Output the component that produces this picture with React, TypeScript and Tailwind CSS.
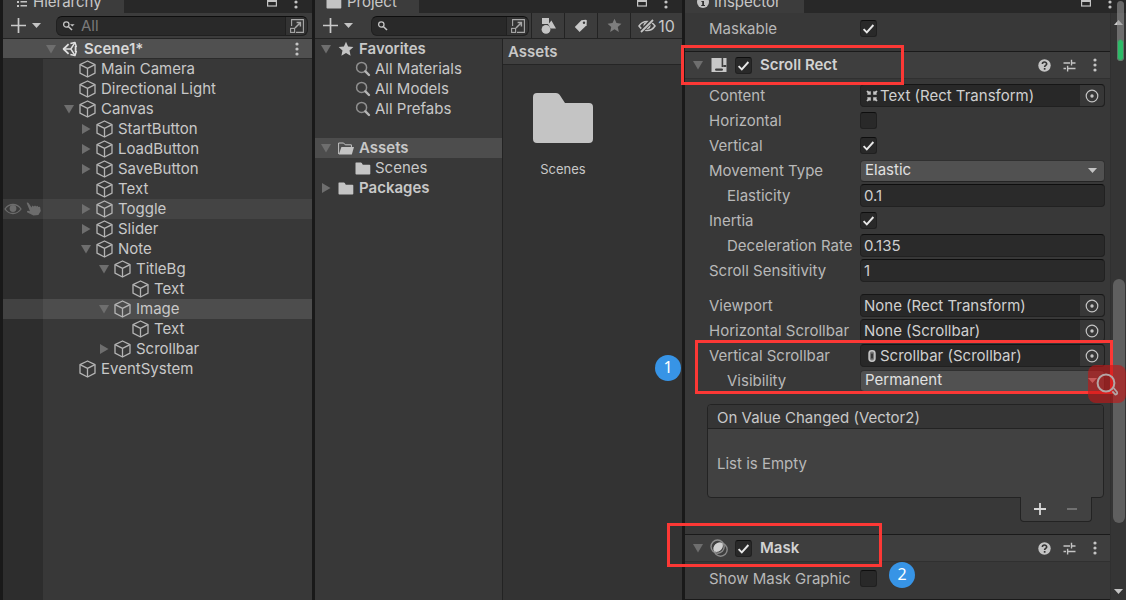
import React, { useId } from "react";
import type { ReactNode } from "react";

/* ---------- icons ---------- */

function Cube() {
  return (
    <svg className="h-[18px] w-[17px] shrink-0" viewBox="0 0 17 18" fill="none" stroke="#b4b4b4" strokeWidth="1.3" strokeLinejoin="round" aria-hidden="true">
      <path d="M8.5 1 L16 4.6 V13.2 L8.5 17 L1 13.2 V4.6 Z" />
      <path d="M1 4.6 L8.5 8.4 L16 4.6 M8.5 8.4 V17" />
    </svg>
  );
}

function UnityLogo() {
  return (
    <svg className="h-4 w-4 shrink-0" viewBox="0 0 16 16" fill="none" stroke="#e0e0e0" strokeWidth="1.5" strokeLinejoin="round" aria-hidden="true">
      <path d="M8.4 2.6 L13 1.4 L14.4 6 M14.4 10 L13 14.6 L8.4 13.4" />
      <path d="M6.6 3.2 L1.6 8 L6.6 12.8" strokeWidth="1.8" />
      <path d="M1.6 8 H8.8 M8.8 8 L12.8 1.8 M8.8 8 L12.8 14.2" />
      <path d="M13.6 5 V11" strokeWidth="1.8" />
    </svg>
  );
}

function Triangle({ open }: { open: boolean }) {
  return (
    <svg className="h-[10px] w-[10px]" viewBox="0 0 10 10" fill="#6e6e6e" aria-hidden="true">
      {open ? <path d="M0 1 H10 L5 9.5 Z" /> : <path d="M1 0 L9.5 5 L1 10 Z" />}
    </svg>
  );
}

function Caret() {
  return (
    <svg className="h-[5px] w-[9px]" viewBox="0 0 9 5" fill="#c4c4c4" aria-hidden="true">
      <path d="M0 0 H9 L4.5 5 Z" />
    </svg>
  );
}

function PlusIcon() {
  return (
    <svg className="h-[15px] w-[15px]" viewBox="0 0 15 15" stroke="#c9c9c9" strokeWidth="1.7" aria-hidden="true">
      <path d="M7.5 0 V15 M0 7.5 H15" />
    </svg>
  );
}

function Kebab() {
  return (
    <svg className="h-[14px] w-1" viewBox="0 0 4 14" fill="#c4c4c4" aria-hidden="true">
      <circle cx="2" cy="2" r="1.6" />
      <circle cx="2" cy="7" r="1.6" />
      <circle cx="2" cy="12" r="1.6" />
    </svg>
  );
}

function MaximizeIcon() {
  return (
    <svg className="h-3 w-[10px]" viewBox="0 0 10 12" fill="none" stroke="#c4c4c4" strokeWidth="1.2" aria-hidden="true">
      <rect x="0.6" y="0.6" width="8.8" height="9.4" />
      <path d="M0 5 H10" strokeWidth="2" />
    </svg>
  );
}

function SmallSearch({ menu }: { menu?: boolean }) {
  return (
    <svg className="h-3 w-[13px] shrink-0" viewBox="0 0 13 12" fill="none" stroke="#c4c4c4" strokeWidth="1.3" aria-hidden="true">
      <circle cx="4.3" cy="4.5" r="2.7" />
      <path d="M6.3 6.5 L10 10" strokeWidth="1.6" />
      {menu && <path d="M8 4.2 H12.6 L10.3 6.6 Z" fill="#c4c4c4" stroke="none" />}
    </svg>
  );
}

function PopOutIcon() {
  return (
    <svg className="h-4 w-4" viewBox="0 0 16 16" fill="none" stroke="#a8a8a8" strokeWidth="1.1" aria-hidden="true">
      <path d="M2.6 8 V1.6 H14.4 V14.4 H7" />
      <rect x="1.6" y="10.4" width="4" height="4" />
      <path d="M6 10 L11 5 M7.6 4.6 H11.4 V8.4" strokeWidth="1.5" />
    </svg>
  );
}

function Magnifier() {
  return (
    <svg className="h-4 w-4 shrink-0" viewBox="0 0 16 16" fill="none" stroke="#8f8f8f" aria-hidden="true">
      <circle cx="6.6" cy="6.4" r="5" strokeWidth="1.5" />
      <path d="M10.4 10.4 L14 14" stroke="#b5b5b5" strokeWidth="2.4" strokeLinecap="round" />
    </svg>
  );
}

function Star({ className }: { className: string }) {
  return (
    <svg className={className} viewBox="0 0 16 16" fill="currentColor" aria-hidden="true">
      <path d="M8 0.8 L10.1 5.4 L15.4 6 L11.5 9.5 L12.6 14.8 L8 12.1 L3.4 14.8 L4.5 9.5 L0.6 6 L5.9 5.4 Z" />
    </svg>
  );
}

function Folder() {
  return (
    <svg className="h-[13px] w-4 shrink-0" viewBox="0 0 16 13" fill="#c4c4c4" aria-hidden="true">
      <path d="M1 0.5 H5.8 Q6.4 0.5 6.8 1.1 L7.8 2.8 H14.4 Q15.3 2.8 15.3 3.6 V11.7 Q15.3 12.5 14.4 12.5 H1.4 Q0.5 12.5 0.5 11.7 V1.1 Q0.5 0.5 1 0.5 Z" />
    </svg>
  );
}

function LargeFolder() {
  return (
    <svg className="h-[50px] w-[60px]" viewBox="0 0 60 50" fill="#c4c4c4" aria-hidden="true">
      <path d="M4 0 H23 Q25.4 0 26.6 1.8 L32 10 H56 Q60 10 60 14 V46 Q60 50 56 50 H4 Q0 50 0 46 V4 Q0 0 4 0 Z" />
    </svg>
  );
}

function FolderOpen() {
  return (
    <svg className="h-[13px] w-4 shrink-0" viewBox="0 0 16 13" fill="#c4c4c4" aria-hidden="true">
      <path d="M0.6 12 V1 H5.6 L7.2 2.8 H13.4 V5" fill="none" stroke="#c4c4c4" strokeWidth="1" />
      <path d="M3.4 5 H16 L13.8 12.5 H0.8 Z" />
    </svg>
  );
}

function ScrollRectIcon() {
  return (
    <svg className="h-4 w-4 shrink-0" viewBox="0 0 16 16" aria-hidden="true">
      <rect x="0.5" y="1" width="15" height="14" fill="#c8c8c8" />
      <rect x="10.6" y="1" width="1.6" height="9" fill="#3e3e3e" />
      <rect x="12" y="8" width="3.5" height="2" rx="1" fill="#3e3e3e" />
      <rect x="4" y="11.4" width="8" height="2.4" rx="1.2" fill="#3e3e3e" />
    </svg>
  );
}

function MaskIcon() {
  return (
    <svg className="h-[18px] w-[18px] shrink-0" viewBox="0 0 18 18" fill="none" stroke="#8b8b8b" strokeWidth="1.4" aria-hidden="true">
      <circle cx="7.6" cy="7.6" r="6.6" />
      <circle cx="10.6" cy="10.6" r="6.6" />
      <path d="M4.4 12.6 A6 6 0 0 1 12.6 4.4 A6.6 6.6 0 0 1 4.4 12.6 Z" fill="#d0d0d0" stroke="none" />
    </svg>
  );
}

function HelpIcon() {
  return (
    <svg className="h-[13px] w-[13px]" viewBox="0 0 13 13" aria-hidden="true">
      <circle cx="6.5" cy="6.5" r="6.2" fill="#c4c4c4" />
      <path d="M4.4 5 C4.4 2.4 8.7 2.4 8.7 5 C8.7 6.4 6.6 6.4 6.6 8" fill="none" stroke="#333" strokeWidth="1.6" />
      <rect x="5.8" y="9" width="1.7" height="1.7" fill="#333" />
    </svg>
  );
}

function PresetIcon() {
  return (
    <svg className="h-[13px] w-[13px]" viewBox="0 0 13 13" fill="none" stroke="#c4c4c4" strokeWidth="1.4" aria-hidden="true">
      <path d="M0.5 4 H7 M8.5 0.8 V6.5 M8.5 4 H12.5 M0.5 9.5 H3 M4.6 6.8 V12.5 M4.6 9.5 H12.5" />
    </svg>
  );
}

function TargetIcon() {
  return (
    <svg className="h-[14px] w-[14px]" viewBox="0 0 14 14" fill="none" stroke="#c4c4c4" strokeWidth="1.2" aria-hidden="true">
      <circle cx="7" cy="7" r="5.8" />
      <circle cx="7" cy="7" r="1.7" fill="#c4c4c4" stroke="none" />
    </svg>
  );
}

function RectTransformIcon() {
  return (
    <svg className="h-3 w-3 shrink-0" viewBox="0 0 12 12" fill="#c4c4c4" aria-hidden="true">
      <path d="M0.4 1.6 L1.6 0.4 L3 1.6 L4.8 1.2 V4.8 H1.2 L1.6 3 Z M11.6 1.6 L10.4 0.4 L9 1.6 L7.2 1.2 V4.8 H10.8 L10.4 3 Z M0.4 10.4 L1.6 11.6 L3 10.4 L4.8 10.8 V7.2 H1.2 L1.6 9 Z M11.6 10.4 L10.4 11.6 L9 10.4 L7.2 10.8 V7.2 H10.8 L10.4 9 Z" />
    </svg>
  );
}

function ScrollbarIcon() {
  return (
    <svg className="h-3 w-3 shrink-0" viewBox="0 0 12 12" aria-hidden="true">
      <rect x="3.1" y="0.8" width="5.8" height="10.4" rx="2.6" fill="#777" stroke="#c4c4c4" strokeWidth="1.6" />
      <rect x="5.2" y="3.5" width="1.6" height="5" rx="0.5" fill="#292929" />
    </svg>
  );
}

/* ---------- shared parts ---------- */

function TabBar({ icon, title, tabClass, endClass }: { icon: ReactNode; title: string; tabClass: string; endClass: string }) {
  return (
    <div className="flex h-[13px] shrink-0 items-end overflow-hidden bg-[#282828]">
      <div className={`flex h-[22px] items-center bg-[#3c3c3c] ${tabClass}`}>
        {icon}
        <h2>{title}</h2>
      </div>
      <div className={`ml-auto flex h-[22px] items-center gap-[17px] ${endClass}`}>
        <button aria-label={`Maximize ${title}`}><MaximizeIcon /></button>
        <button aria-label={`${title} options`}><Kebab /></button>
      </div>
    </div>
  );
}

function AddMenu({ label }: { label: string }) {
  return (
    <button aria-label={label} className="flex shrink-0 items-center gap-[6px]">
      <PlusIcon />
      <Caret />
    </button>
  );
}

function SearchField({ label, placeholder, menu }: { label: string; placeholder?: string; menu?: boolean }) {
  return (
    <div className="flex h-5 min-w-0 flex-1 items-center rounded-md border border-[#202020] border-t-[#0e0e0e] bg-[#292929]">
      <div className="flex min-w-0 flex-1 items-center gap-[6px] pl-[5px]">
        <SmallSearch menu={menu} />
        <input aria-label={label} placeholder={placeholder} className="w-full min-w-0 bg-transparent leading-4 outline-none placeholder:text-[#7a7a7a]" />
      </div>
      <button aria-label={`Open ${label} window`} className="flex h-full w-[22px] items-center justify-center rounded-r-md border-l border-[#202020] bg-[#333]">
        <PopOutIcon />
      </button>
    </div>
  );
}

/* ---------- hierarchy ---------- */

type TreeNode = { name: string; depth: number; open?: boolean; state?: "hover" | "selected" };

const nodes: TreeNode[] = [
  { name: "Main Camera", depth: 0 },
  { name: "Directional Light", depth: 0 },
  { name: "Canvas", depth: 0, open: true },
  { name: "StartButton", depth: 1, open: false },
  { name: "LoadButton", depth: 1, open: false },
  { name: "SaveButton", depth: 1, open: false },
  { name: "Text", depth: 1 },
  { name: "Toggle", depth: 1, open: false, state: "hover" },
  { name: "Slider", depth: 1, open: false },
  { name: "Note", depth: 1, open: true },
  { name: "TitleBg", depth: 2, open: true },
  { name: "Text", depth: 3 },
  { name: "Image", depth: 2, open: true, state: "selected" },
  { name: "Text", depth: 3 },
  { name: "Scrollbar", depth: 2, open: false },
  { name: "EventSystem", depth: 0 },
];

const indents = ["pl-[18px]", "pl-[35px]", "pl-[53px]", "pl-[71px]"];
const rowColors = { plain: "", hover: "bg-[#444444]", selected: "bg-[#4d4d4d]" };
const gutterColors = { plain: "bg-[#2d2d2d]", hover: "bg-[#3b3b3b]", selected: "bg-[#424242]" };

function HierarchyRow({ node }: { node: TreeNode }) {
  const state = node.state ?? "plain";
  return (
    <li className={`flex h-5 items-center ${rowColors[state]}`}>
      <div className={`flex h-full w-10 shrink-0 items-center gap-1 pl-px ${gutterColors[state]}`}>
        {state === "hover" && (
          <>
            <button aria-label="Toggle visibility">
              <svg className="h-3 w-[18px]" viewBox="0 0 18 12" fill="none" stroke="#6c6c6c" strokeWidth="1.3" aria-hidden="true">
                <path d="M1 6 C5 0 13 0 17 6 C13 12 5 12 1 6 Z" />
                <circle cx="9" cy="5.5" r="3.4" fill="#6c6c6c" stroke="none" />
              </svg>
            </button>
            <button aria-label="Toggle picking">
              <svg className="h-[14px] w-[15px]" viewBox="0 0 15 14" fill="#6c6c6c" aria-hidden="true">
                <path d="M0.6 0.8 Q1.8 -0.2 2.7 1.2 L5.6 5.4 L6.2 3.4 L7.8 4.6 L9 3.4 L10.2 4.6 L11.4 3.8 L12.4 5 L14 4.8 L14.8 9 L12.4 13 L7.4 13.6 L1 10.2 Q0.6 8.8 2.2 8.8 L4 9.2 Z" />
              </svg>
            </button>
          </>
        )}
      </div>
      <div className={`flex items-center ${indents[node.depth]}`}>
        <span className="flex w-[18px] shrink-0 items-center pl-[3px]">
          {node.open !== undefined && (
            <button aria-label={`Expand ${node.name}`} aria-expanded={node.open}><Triangle open={node.open} /></button>
          )}
        </span>
        <Cube />
        <span className="pl-[5px]">{node.name}</span>
      </div>
    </li>
  );
}

function Hierarchy() {
  return (
    <section className="flex min-w-0 flex-col bg-[#383838]">
      <TabBar
        title="Hierarchy"
        tabClass="gap-[6px] pl-[14px] pr-[22px]"
        endClass="pr-[14px]"
        icon={
          <svg className="h-[10px] w-[10px]" viewBox="0 0 10 10" fill="#c4c4c4" aria-hidden="true">
            <path d="M0 0 H2 V2 H0 Z M3.5 0 H10 V1.5 H3.5 Z M0 4 H2 V6 H0 Z M3.5 4 H10 V5.5 H3.5 Z M0 8 H2 V10 H0 Z M3.5 8 H10 V9.5 H3.5 Z" />
          </svg>
        }
      />
      <div className="flex h-[26px] shrink-0 items-center gap-[15px] border-b border-[#232323] bg-[#3c3c3c] pl-2 pr-1">
        <AddMenu label="Create object" />
        <SearchField label="Hierarchy search" placeholder="All" menu />
      </div>
      <div className="flex h-5 shrink-0 items-center border-b border-[#2b2b2b] bg-[#505050] pl-[43px] pr-[13px]">
        <button aria-label="Expand scene" aria-expanded="true" className="w-4"><Triangle open /></button>
        <UnityLogo />
        <h3 className="pl-[6px] font-semibold text-[#d8d8d8]">Scene1*</h3>
        <button aria-label="Scene options" className="ml-auto"><Kebab /></button>
      </div>
      <ul>
        {nodes.map((node, i) => <HierarchyRow key={i} node={node} />)}
      </ul>
      <div className="w-10 flex-1 bg-[#2d2d2d]" />
    </section>
  );
}

/* ---------- project ---------- */

function ProjectRow({ icon, name, open, child, selected }: { icon: ReactNode; name: string; open?: boolean; child?: boolean; selected?: boolean }) {
  return (
    <li className={`flex h-5 items-center ${child ? "gap-1 pl-10" : "gap-[5px] pl-[6px] font-semibold"} ${selected ? "bg-[#4d4d4d]" : ""}`}>
      {open !== undefined && (
        <button aria-label={`Expand ${name}`} aria-expanded={open} className="w-3"><Triangle open={open} /></button>
      )}
      {icon}
      <span>{name}</span>
    </li>
  );
}

function FilterButton({ label, children, wide }: { label: string; children: ReactNode; wide?: boolean }) {
  return (
    <button aria-label={label} className={`flex h-full shrink-0 items-center justify-center gap-[2px] border-l border-[#232323] ${wide ? "w-[52px]" : "w-[33px]"}`}>
      {children}
    </button>
  );
}

function Project() {
  return (
    <section className="flex min-w-0 flex-col bg-[#383838]">
      <TabBar title="Project" tabClass="gap-[5px] pl-[11px] pr-[22px]" endClass="pr-[14px]" icon={<Folder />} />
      <div className="flex h-[26px] shrink-0 items-center border-b border-[#232323] bg-[#3c3c3c] pl-2">
        <AddMenu label="Create asset" />
        <div className="flex min-w-0 flex-1 pl-[18px] pr-[2px]">
          <SearchField label="Project search" />
        </div>
        <FilterButton label="Search by type">
          <svg className="h-4 w-4" viewBox="0 0 16 16" fill="#c4c4c4" aria-hidden="true">
            <rect x="2" y="0" width="7" height="6" />
            <circle cx="6" cy="11.4" r="4.4" />
            <path d="M11.4 2.4 L16 10.4 H10.4 Q9.6 7.4 8 6.8 Z" />
          </svg>
        </FilterButton>
        <FilterButton label="Search by label">
          <svg className="h-[14px] w-[14px]" viewBox="0 0 14 14" aria-hidden="true">
            <path d="M7.4 1.2 L11.6 0.8 Q12.8 0.8 12.8 1.8 L12.6 6.2 L5.6 13 L0.8 8 Z" fill="#c9c9c9" />
            <circle cx="10" cy="3.8" r="1.2" fill="#3c3c3c" />
          </svg>
        </FilterButton>
        <FilterButton label="Save search"><Star className="h-[15px] w-[15px] text-[#7d7d7d]" /></FilterButton>
        <FilterButton label="Hidden packages" wide>
          <svg className="h-[14px] w-[18px]" viewBox="0 0 18 14" fill="none" stroke="#c4c4c4" strokeWidth="1.5" aria-hidden="true">
            <path d="M1 7 C5 1 13 1 17 7 C13 13 5 13 1 7 Z" />
            <circle cx="9" cy="6.6" r="2.8" fill="#c4c4c4" />
            <path d="M2.6 13.2 L14.4 0.8" stroke="#3c3c3c" strokeWidth="4" />
            <path d="M3 13 L15 1" strokeWidth="1.8" />
          </svg>
          <span className="text-base">10</span>
        </FilterButton>
      </div>
      <div className="flex flex-1">
        <nav aria-label="Folders" className="w-[188px] shrink-0 border-r border-[#232323]">
          <ul>
            <ProjectRow name="Favorites" open icon={<Star className="h-4 w-4 shrink-0 text-[#c4c4c4]" />} />
            <ProjectRow name="All Materials" child icon={<Magnifier />} />
            <ProjectRow name="All Models" child icon={<Magnifier />} />
            <ProjectRow name="All Prefabs" child icon={<Magnifier />} />
          </ul>
          <ul className="pt-[19px]">
            <ProjectRow name="Assets" open selected icon={<FolderOpen />} />
            <ProjectRow name="Scenes" child icon={<Folder />} />
            <ProjectRow name="Packages" open={false} icon={<Folder />} />
          </ul>
        </nav>
        <div className="flex min-w-0 flex-1 flex-col bg-[#333]">
          <h3 className="flex h-[26px] items-center border-b border-[#252525] bg-[#3f3f3f] pl-[5px] font-semibold">Assets</h3>
          <div className="flex flex-wrap px-5 pt-7">
            <button className="flex w-20 flex-col items-center gap-4">
              <LargeFolder />
              <span className="text-[13px] leading-5">Scenes</span>
            </button>
          </div>
        </div>
      </div>
    </section>
  );
}

/* ---------- inspector ---------- */

function Check({ id, label, checked }: { id?: string; label?: string; checked?: boolean }) {
  return (
    <span className="grid h-[17px] w-[17px] shrink-0">
      <input
        id={id}
        type="checkbox"
        aria-label={label}
        defaultChecked={checked}
        className="peer col-start-1 row-start-1 appearance-none rounded-[3px] border border-[#202020] border-t-[#0e0e0e] bg-[#292929]"
      />
      <svg className="pointer-events-none invisible col-start-1 row-start-1 h-[17px] w-[17px] peer-checked:visible" viewBox="0 0 17 17" fill="none" stroke="#e8e8e8" strokeWidth="1.9" aria-hidden="true">
        <path d="M3.6 9.2 L6.8 12.4 L13.4 5" />
      </svg>
    </span>
  );
}

function Row({ id, label, nested, children }: { id: string; label: string; nested?: boolean; children: ReactNode }) {
  return (
    <div className="flex h-[25px] items-center pr-[5px]">
      <label htmlFor={id} className={`w-[175px] shrink-0 whitespace-nowrap text-[#b8b8b8] ${nested ? "pl-[42px]" : "pl-6"}`}>{label}</label>
      {children}
    </div>
  );
}

function CheckRow({ label, checked }: { label: string; checked?: boolean }) {
  const id = useId();
  return <Row id={id} label={label}><Check id={id} checked={checked} /></Row>;
}

function TextRow({ label, value, nested }: { label: string; value: string; nested?: boolean }) {
  const id = useId();
  return (
    <Row id={id} label={label} nested={nested}>
      <input id={id} defaultValue={value} className="h-[23px] min-w-0 flex-1 rounded-[4px] border border-[#212121] border-t-[#0e0e0e] bg-[#2a2a2a] px-[3px] text-[#d0d0d0] outline-none" />
    </Row>
  );
}

function SelectRow({ label, value, options, nested }: { label: string; value: string; options: string[]; nested?: boolean }) {
  const id = useId();
  return (
    <Row id={id} label={label} nested={nested}>
      <span className="grid min-w-0 flex-1 items-center">
        <select id={id} defaultValue={value} className="col-start-1 row-start-1 h-[22px] w-full appearance-none rounded-[4px] border border-[#303030] border-b-[#242424] bg-[#515151] px-1 pb-[2px] leading-[18px] text-[#e0e0e0] outline-none">
          {options.map((option) => <option key={option}>{option}</option>)}
        </select>
        <span className="pointer-events-none col-start-1 row-start-1 justify-self-end pr-2"><Caret /></span>
      </span>
    </Row>
  );
}

function ObjectRow({ label, value, icon }: { label: string; value: string; icon?: ReactNode }) {
  const id = useId();
  return (
    <Row id={id} label={label}>
      <div className="flex h-[23px] min-w-0 flex-1 items-center rounded-[4px] border border-[#202020] border-t-[#161616] bg-[#282828] pl-[3px]">
        {icon && <span className="flex w-4 shrink-0 justify-center">{icon}</span>}
        <input id={id} readOnly defaultValue={value} className="w-full min-w-0 bg-transparent leading-5 text-[#d0d0d0] outline-none" />
        <button aria-label={`Select ${label}`} className="flex h-full w-6 shrink-0 items-center justify-center rounded-r-[4px] bg-[#373737]">
          <TargetIcon />
        </button>
      </div>
    </Row>
  );
}

function ComponentHeader({ title, icon, children }: { title: string; icon: ReactNode; children?: ReactNode }) {
  return (
    <div className="relative flex h-7 items-center border-b border-t border-b-[#303030] border-t-[#1a1a1a] bg-[#3e3e3e] pl-2 pr-[9px]">
      <button aria-label={`Collapse ${title}`} aria-expanded="true"><Triangle open /></button>
      <span className="flex w-8 items-center justify-center">{icon}</span>
      <Check label={`${title} enabled`} checked />
      <h3 className="pl-2 font-semibold text-[#d2d2d2]">{title}</h3>
      <div className="ml-auto flex items-center gap-3">
        <button aria-label={`${title} help`}><HelpIcon /></button>
        <button aria-label={`${title} presets`}><PresetIcon /></button>
        <button aria-label={`${title} options`} className="flex w-[13px] justify-center"><Kebab /></button>
      </div>
      {children}
    </div>
  );
}

function Badge({ className, children }: { className: string; children: ReactNode }) {
  return (
    <span className={`absolute z-10 flex h-[26px] w-[26px] items-center justify-center rounded-full bg-[#3794e6] pb-[2px] font-['Noto_Sans',sans-serif] text-base text-white ${className}`}>
      {children}
    </span>
  );
}

function Inspector() {
  return (
    <section className="relative flex min-w-0 flex-col bg-[#383838]">
      <TabBar
        title="Inspector"
        tabClass="gap-[5px] pl-3 pr-[23px]"
        endClass="pr-[14px]"
        icon={
          <svg className="h-3 w-3" viewBox="0 0 12 12" aria-hidden="true">
            <circle cx="6" cy="6" r="6" fill="#c4c4c4" />
            <path d="M5 2.2 H7 V4 H5 Z M4.4 5 H7 V9 H8 V10 H4.2 V9 H5.2 V6 H4.4 Z" fill="#333" />
          </svg>
        }
      />
      <div className="flex flex-1">
        <div className="min-w-0 flex-1">
          <div className="pb-[10px] pt-[3px]">
            <CheckRow label="Maskable" checked />
          </div>

          <ComponentHeader title="Scroll Rect" icon={<ScrollRectIcon />}>
            <span className="absolute -left-1 -top-[7px] z-10 h-10 w-[223px] border-[3px] border-[#fc3835]" />
          </ComponentHeader>
          <div className="pt-1">
            <ObjectRow label="Content" value="Text (Rect Transform)" icon={<RectTransformIcon />} />
            <CheckRow label="Horizontal" />
            <CheckRow label="Vertical" checked />
            <SelectRow label="Movement Type" value="Elastic" options={["Unrestricted", "Elastic", "Clamped"]} />
            <TextRow label="Elasticity" value="0.1" nested />
            <CheckRow label="Inertia" checked />
            <TextRow label="Deceleration Rate" value="0.135" nested />
            <TextRow label="Scroll Sensitivity" value="1" />
          </div>
          <div className="pt-[10px]">
            <ObjectRow label="Viewport" value="None (Rect Transform)" />
            <ObjectRow label="Horizontal Scrollbar" value="None (Scrollbar)" />
            <div className="relative">
              <ObjectRow label="Vertical Scrollbar" value="Scrollbar (Scrollbar)" icon={<ScrollbarIcon />} />
              <SelectRow label="Visibility" value="Permanent" options={["Permanent", "Auto Hide", "Auto Hide And Expand Viewport"]} nested />
              <span className="absolute -right-[3px] -top-[3px] left-[10px] z-10 h-[54px] border-[3px] border-[#fc3835]" />
              <Badge className="-left-[30px] top-3">1</Badge>
              <button aria-label="Image search" className="absolute -right-4 top-[22px] z-10 flex h-[38px] w-[38px] items-center justify-end rounded-lg bg-[#c81414]/60 pr-[7px]">
                <svg className="h-6 w-6" viewBox="0 0 24 24" fill="none" stroke="#b4a6a6" aria-hidden="true">
                  <circle cx="11" cy="11" r="8.4" strokeWidth="2" />
                  <path d="M18.6 16 L22 20 Q22.8 22.2 20.4 22.6 L17.4 19.4" strokeWidth="1.8" strokeLinejoin="round" />
                </svg>
              </button>
            </div>
          </div>

          <div className="pb-[11px] pl-[22px] pr-[6px] pt-[11px]">
            <div className="rounded-[4px] border border-[#232323] bg-[#414141]">
              <h4 className="flex h-6 items-center rounded-t-[4px] border-b border-[#232323] bg-[#353535] pl-[9px] pt-[2px]">On Value Changed (Vector2)</h4>
              <p className="flex h-[68px] items-center pl-[9px] pt-[2px] text-[#b8b8b8]">List is Empty</p>
            </div>
            <div className="flex justify-end pr-3">
              <div className="relative -top-px flex h-[25px] w-[72px] items-center justify-center gap-5 rounded-b-[4px] border border-t-0 border-[#232323] bg-[#414141] pb-px">
                <button aria-label="Add event">
                  <svg className="h-3 w-3" viewBox="0 0 12 12" stroke="#d8d8d8" strokeWidth="1.8" aria-hidden="true"><path d="M6 0 V12 M0 6 H12" /></svg>
                </button>
                <button aria-label="Remove event">
                  <svg className="h-3 w-3" viewBox="0 0 12 12" stroke="#7d7d7d" strokeWidth="1.6" aria-hidden="true"><path d="M1 6 H11" /></svg>
                </button>
              </div>
            </div>
          </div>

          <ComponentHeader title="Mask" icon={<MaskIcon />}>
            <span className="absolute -left-[18px] -top-3 z-10 h-11 w-[215px] border-[3px] border-[#fc3835]" />
            <Badge className="left-[204px] top-[27px]">2</Badge>
          </ComponentHeader>
          <div className="border-b border-[#1a1a1a] pb-2 pt-1">
            <CheckRow label="Show Mask Graphic" />
          </div>
        </div>

        <div className="flex w-4 shrink-0 flex-col items-center border-l border-[#303030] bg-[#353535] pb-[6px] pt-[7px]">
          <svg className="h-[5px] w-[9px] shrink-0" viewBox="0 0 9 5" fill="#d0d0d0" aria-hidden="true"><path d="M0 5 H9 L4.5 0 Z" /></svg>
          <div className="flex w-3 flex-1 flex-col">
            <div className="flex-[254]" />
            <div className="flex-[244] rounded-full bg-[#5f5f5f]" />
            <div className="flex-[66]" />
          </div>
          <Caret />
        </div>
      </div>
      <div className="absolute right-[2px] top-px flex h-[60px] w-[7px] flex-col justify-end rounded-full bg-[#929292]/60">
        <span className="h-[22px] rounded-full border border-[#5f7868] bg-[#2dbb67]" />
      </div>
    </section>
  );
}

export default function App() {
  return (
    <main className="grid min-h-screen grid-cols-[minmax(0,309fr)_minmax(0,367fr)_minmax(0,441fr)] gap-[3px] overflow-hidden border-l-[3px] border-[#191919] bg-[#191919] font-[Inter,sans-serif] text-[15px] leading-5 text-[#c8c8c8]">
      <Hierarchy />
      <Project />
      <Inspector />
    </main>
  );
}
